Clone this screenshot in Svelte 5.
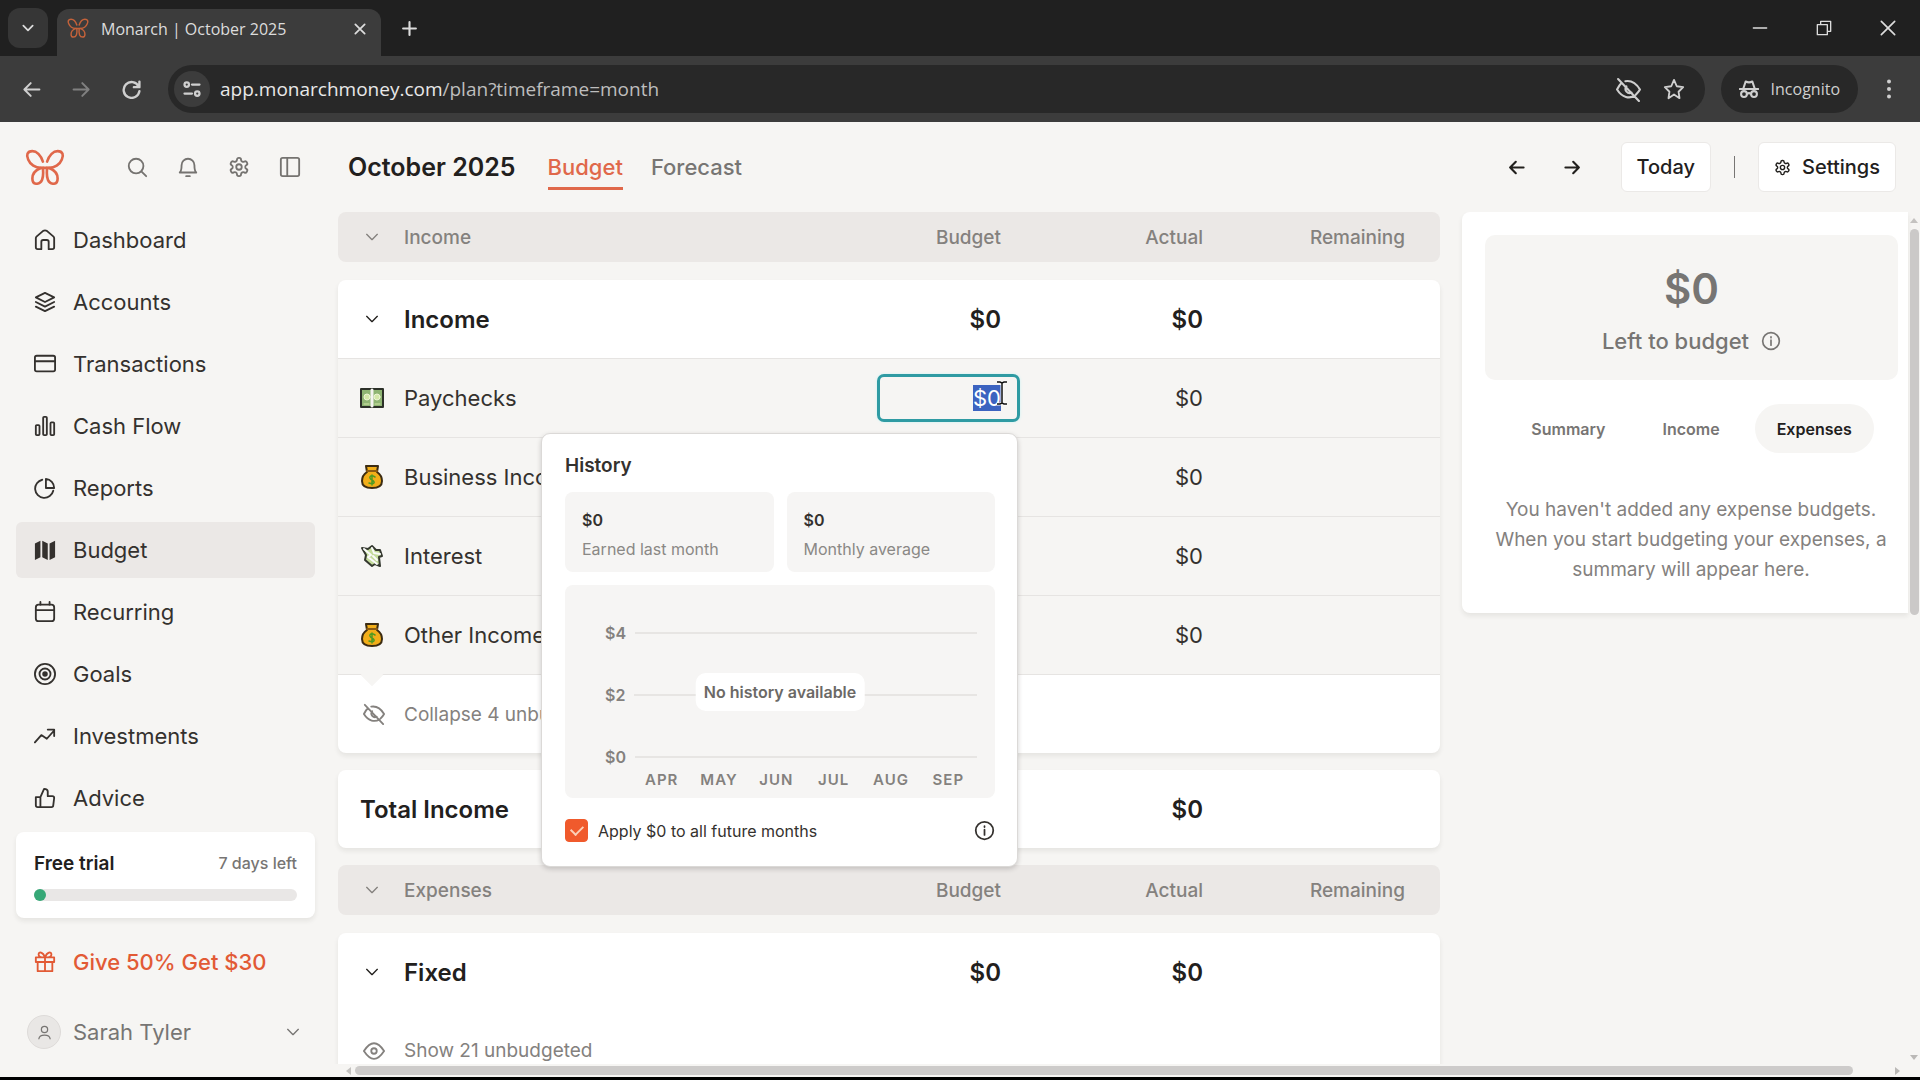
<script>
  import { onMount } from 'svelte';

  const icons = {
    search: '<circle cx="11" cy="11" r="8"/><path d="M17 17l5 5"/>',
    bell: '<path d="M3 18c2-2 2-4 2-8a7 7 0 0 1 14 0c0 4 0 6 2 8zM10 22h4"/>',
    gear: '<circle cx="12" cy="12" r="3"/><path d="M12.22 2h-.44a2 2 0 0 0-2 2v.18a2 2 0 0 1-1 1.73l-.43.25a2 2 0 0 1-2 0l-.15-.08a2 2 0 0 0-2.73.73l-.22.38a2 2 0 0 0 .73 2.73l.15.1a2 2 0 0 1 1 1.72v.51a2 2 0 0 1-1 1.74l-.15.09a2 2 0 0 0-.73 2.73l.22.38a2 2 0 0 0 2.73.73l.15-.08a2 2 0 0 1 2 0l.43.25a2 2 0 0 1 1 1.73V20a2 2 0 0 0 2 2h.44a2 2 0 0 0 2-2v-.18a2 2 0 0 1 1-1.73l.43-.25a2 2 0 0 1 2 0l.15.08a2 2 0 0 0 2.73-.73l.22-.39a2 2 0 0 0-.73-2.73l-.15-.08a2 2 0 0 1-1-1.74v-.5a2 2 0 0 1 1-1.74l.15-.09a2 2 0 0 0 .73-2.73l-.22-.38a2 2 0 0 0-2.73-.73l-.15.08a2 2 0 0 1-2 0l-.43-.25a2 2 0 0 1-1-1.73V4a2 2 0 0 0-2-2z"/>',
    panel: '<rect x="2" y="2" width="20" height="20" rx="2"/><path d="M9 2v20"/>',
    home: '<path d="M2 10a3 3 0 0 1 1-2l7-6q2-1 4 0l7 6a3 3 0 0 1 1 2v10a2 2 0 0 1-2 2h-4v-8a2 2 0 0 0-2-2h-4a2 2 0 0 0-2 2v8H4a2 2 0 0 1-2-2z"/>',
    layers: '<path d="M12 2l10 5-10 5L2 7zM2 12l10 5 10-5M2 17l10 5 10-5"/>',
    card: '<rect x="1" y="3" width="22" height="17" rx="2"/><path d="M1 9h22"/>',
    bars: '<rect x="2" y="11" width="4" height="11" rx="1"/><rect x="10" y="2" width="4" height="20" rx="1"/><rect x="18" y="8" width="4" height="14" rx="1"/>',
    pie: '<path d="M9 3a10 10 0 1 0 12 12"/><path d="M13 2v10h9a10 10 0 0 0-9-10z"/>',
    map: '<path fill="currentColor" stroke="none" d="M1 5l6-3v18l-6 3zM9 2l6 3v18l-6-3zM17 5l6-3v18l-6 3z"/>',
    calendar: '<rect x="2" y="4" width="20" height="18" rx="3"/><path d="M2 10h20M7 1v3M17 1v3"/>',
    target: '<circle cx="12" cy="12" r="11"/><circle cx="12" cy="12" r="6"/><circle cx="12" cy="12" r="2" fill="currentColor"/>',
    trend: '<path d="M1 19l7-8 6 4 8-9M15 5h7v7"/>',
    thumb: '<path d="M2 11h5v11H4a2 2 0 0 1-2-2zM7 11l4-9c2 0 4 1 4 3v5h5a2 2 0 0 1 2 2l-1 8a2 2 0 0 1-2 2H7"/>',
    gift: '<path d="M2 7h20v5H2zM4 12v10h16V12M12 7v15M12 7C10 1 5 0 5 4c0 2 2 3 7 3 5 0 7-1 7-3 0-4-5-3-7 3z"/>',
    person: '<circle cx="12" cy="7" r="5"/><path d="M3 22c1-8 17-8 18 0"/>',
    chevron: '<path d="M4 8l8 8 8-8"/>',
    left: '<path d="M22 12H3M11 4l-8 8 8 8"/>',
    right: '<path d="M2 12h19M13 4l8 8-8 8"/>',
    info: '<circle cx="12" cy="12" r="10"/><path d="M12 11v6M12 7v1"/>',
    eye: '<path d="M1 12q11-17 22 0-11 17-22 0z"/><circle cx="12" cy="12" r="3"/>',
    eyeOff: '<path d="M2 2l20 21M5 6c-2 2-3 4-4 6 5 8 12 9 17 6M9 4c6-1 11 3 14 8-1 2-2 3-4 5M10 9a4 4 0 0 0 5 6"/>',
    reload: '<path d="M21 8A10 10 0 1 0 22 14M22 2v7h-7"/>',
    star: '<path d="M12 2l3 7 7 1-5 5 1 7-6-4-6 4 1-7-5-5 7-1z"/>',
    close: '<path d="M4 4l16 16M20 4L4 20"/>',
    plus: '<path d="M12 3v18M3 12h18"/>',
    tune: '<circle cx="5" cy="6" r="3"/><path d="M12 6h10M2 18h10"/><circle cx="19" cy="18" r="3"/>',
    minimize: '<path d="M2 12h20"/>',
    restore: '<path d="M2 7h15v15H2zM7 7V2h15v15h-5"/>',
    dots: '<g fill="currentColor" stroke="none"><circle cx="12" cy="3" r="2.4"/><circle cx="12" cy="12" r="2.4"/><circle cx="12" cy="21" r="2.4"/></g>',
    incognito: '<path d="M1 12h22M5 12l3-9q4 2 8 0l3 9"/><circle cx="6" cy="18" r="3.5"/><circle cx="18" cy="18" r="3.5"/><path d="M9.5 18q2.500-2 5 0"/>',
    cash: '<rect x="1" y="3" width="22" height="18" fill="#8fb573" stroke="#2c3028"/><circle cx="7" cy="11" r="3" fill="#d3e8a8" stroke="#eef5d4" stroke-width="1"/><circle cx="17" cy="11" r="3" fill="#d3e8a8" stroke="#eef5d4" stroke-width="1"/><path d="M12 4v16" stroke="#f4f4f0" stroke-width="3"/><path d="M4 18h5M15 18h5" stroke="#d3e8a8" stroke-width="1"/>',
    bag: '<path d="M6 1h12l-1 6c3 2 5 5 5 9 0 5-4 7-10 7S2 21 2 16c0-4 2-7 5-9z" fill="#f2ae19" stroke="#3c2c12"/><path d="M7 6h10" stroke="#8a5a12"/><path d="M15 12c-5-3-7 1-3 3s2 5-3 3M12 10v10" stroke="#4f9a23" stroke-width="1.500"/>',
    wings: '<path d="M2 4l6 1 4-3 4 4h4l2 6-3 1 1 9-5-2-3 2-7-6 1-5z" fill="#c4db9c" stroke="#34382f"/><path d="M4 5l7 6-3 2 9 7M12 4l2 5 6 1M13 12l4 4" stroke="#fafafa"/>'
  };

  const nav = [
    ['home', 'Dashboard'],
    ['layers', 'Accounts'],
    ['card', 'Transactions'],
    ['bars', 'Cash Flow'],
    ['pie', 'Reports'],
    ['map', 'Budget'],
    ['calendar', 'Recurring'],
    ['target', 'Goals'],
    ['trend', 'Investments'],
    ['thumb', 'Advice']
  ];
  const tools = [
    ['search', 'Search'],
    ['bell', 'Notifications'],
    ['gear', 'Preferences'],
    ['panel', 'Toggle sidebar']
  ];
  const categories = [
    ['cash', 'Paychecks'],
    ['bag', 'Business Income'],
    ['wings', 'Interest'],
    ['bag', 'Other Income']
  ];
  const stats = ['Earned last month', 'Monthly average'];
  const months = ['APR', 'MAY', 'JUN', 'JUL', 'AUG', 'SEP'];
  const summaryTabs = ['Summary', 'Income', 'Expenses'];

  let activeTab = $state('Expenses');
  let applyFuture = $state(true);
  let amount = $state('$0');
  let amountInput;

  onMount(() => {
    amountInput.focus();
    amountInput.select();
  });
</script>

{#snippet icon(name, size = 24, weight = 2)}
  <svg width={size} height={size} viewBox="0 0 24 24" fill="none" stroke="currentColor" stroke-width={weight} stroke-linecap="round" stroke-linejoin="round" aria-hidden="true">
    {@html icons[name]}
  </svg>
{/snippet}

{#snippet logo(width)}
  <svg {width} viewBox="0 0 38 35" fill="none" stroke="currentColor" stroke-width="2.5" stroke-linecap="round" stroke-linejoin="round" aria-hidden="true">
    <path d="M17 12C15 6 11 2 7 2 2 2 1 6 3 10c2 5 7 8 12 8h8c5 0 10-3 12-8 2-4 1-8-4-8-4 0-8 4-10 10" />
    <path d="M15 18c-5 2-8 6-8 10 0 3 1 5 4 5 5 0 7-5 6-15M23 18c5 2 8 6 8 10 0 3-1 5-4 5-5 0-7-5-6-15" />
  </svg>
{/snippet}

{#snippet columns(title)}
  <thead>
    <tr>
      <th class="name"><button class="toggle" aria-label="Collapse {title}">{@render icon('chevron', 16)}</button>{title}</th>
      <th>Budget</th>
      <th>Actual</th>
      <th>Remaining</th>
    </tr>
  </thead>
{/snippet}

{#snippet group(title)}
  <tr class="group">
    <td class="name"><button class="toggle" aria-label="Collapse {title} group">{@render icon('chevron', 16)}</button>{title}</td>
    <td>$0</td>
    <td>$0</td>
    <td></td>
  </tr>
{/snippet}

<div class="window">
  <div class="tab-strip">
    <button class="tab-list" aria-label="Search tabs">{@render icon('chevron', 14, 3)}</button>
    <div class="browser-tab">
      <span class="favicon">{@render logo(22)}</span>
      <span class="tab-title">Monarch | October 2025</span>
      <button aria-label="Close tab">{@render icon('close', 14, 3)}</button>
    </div>
    <button class="new-tab" aria-label="New tab">{@render icon('plus', 17, 3)}</button>
    <div class="window-buttons">
      <button aria-label="Minimize">{@render icon('minimize', 16)}</button>
      <button aria-label="Restore">{@render icon('restore', 16)}</button>
      <button aria-label="Close window">{@render icon('close', 20)}</button>
    </div>
  </div>

  <div class="toolbar">
    <button aria-label="Back">{@render icon('left', 19, 2.5)}</button>
    <button class="dim" aria-label="Forward">{@render icon('right', 19, 2.5)}</button>
    <button class="reload" aria-label="Reload">{@render icon('reload', 19, 3)}</button>
    <div class="address">
      <span class="site-info">{@render icon('tune', 18, 3)}</span>
      <span class="url">app.monarchmoney.com<span>/plan?timeframe=month</span></span>
      <button aria-label="Tracking protection">{@render icon('eyeOff', 25)}</button>
      <button aria-label="Bookmark">{@render icon('star', 22)}</button>
    </div>
    <div class="incognito">{@render icon('incognito', 20, 2.5)}Incognito</div>
    <button aria-label="Menu">{@render icon('dots', 20)}</button>
  </div>

  <div class="page">
    <aside>
      <div class="brand-row">
        <a class="brand" href="#dashboard" aria-label="Monarch">{@render logo(40)}</a>
        {#each tools as [name, label]}
          <button aria-label={label}>{@render icon(name, 22)}</button>
        {/each}
      </div>

      <nav>
        {#each nav as [name, label]}
          <a href="#{name}" class:active={label === 'Budget'}>{@render icon(name, 22)}{label}</a>
        {/each}
      </nav>

      <div class="trial">
        <div class="trial-text"><strong>Free trial</strong><span>7 days left</span></div>
        <div class="trial-bar"><div></div></div>
      </div>
      <a class="referral" href="#referral">{@render icon('gift', 22)}Give 50% Get $30</a>
      <button class="account">
        <span class="avatar">{@render icon('person', 15)}</span>
        <span class="account-name">Sarah Tyler</span>
        {@render icon('chevron', 16)}
      </button>
    </aside>

    <main>
      <header>
        <h1>October 2025</h1>
        <a class="view active" href="#budget">Budget</a>
        <a class="view" href="#forecast">Forecast</a>
        <div class="spacer"></div>
        <button class="arrow" aria-label="Previous month">{@render icon('left', 17, 3)}</button>
        <button class="arrow" aria-label="Next month">{@render icon('right', 17, 3)}</button>
        <button class="solid">Today</button>
        <span class="divider"></span>
        <button class="solid">{@render icon('gear', 17)}Settings</button>
      </header>

      <div class="content">
        <div class="tables">
          <table>
            {@render columns('Income')}
            <tbody class="card">
              {@render group('Income')}
              {#each categories as [name, label], i}
                <tr class="category">
                  <td class="name"><span class="emoji">{@render icon(name, 24)}</span>{label}</td>
                  <td>
                    {#if i === 0}
                      <div class="amount">
                        <input aria-label="{label} budget" bind:value={amount} bind:this={amountInput} />
                        <svg class="cursor" width="12" height="26" viewBox="0 0 12 26" fill="none" aria-hidden="true">
                          <path d="M1 2h3l2 1 2-1h3M6 3v20M1 24h3l2-1 2 1h3" stroke="#fff" stroke-width="3" />
                          <path d="M1 2h3l2 1 2-1h3M6 3v20M1 24h3l2-1 2 1h3" stroke="#111" stroke-width="1.5" />
                        </svg>

                        <div class="history">
                          <h2>History</h2>
                          <div class="stats">
                            {#each stats as stat}
                              <div><strong>$0</strong><span>{stat}</span></div>
                            {/each}
                          </div>
                          <div class="chart">
                            <div class="grid-line"><span>$4</span></div>
                            <div class="grid-line"><span>$2</span></div>
                            <div class="grid-line"><span>$0</span></div>
                            <div class="months">
                              {#each months as month}<span>{month}</span>{/each}
                            </div>
                            <div class="no-history">No history available</div>
                          </div>
                          <div class="apply">
                            <label><input type="checkbox" bind:checked={applyFuture} />Apply $0 to all future months</label>
                            <button aria-label="More information">{@render icon('info', 21)}</button>
                          </div>
                        </div>
                      </div>
                    {/if}
                  </td>
                  <td>$0</td>
                  <td></td>
                </tr>
              {/each}
              <tr class="reveal notched">
                <td class="name"><button>{@render icon('eyeOff', 22)}Collapse 4 unbudgeted</button></td>
              </tr>
            </tbody>
            <tbody class="card">
              <tr class="group">
                <td class="name">Total Income</td>
                <td>$0</td>
                <td>$0</td>
                <td></td>
              </tr>
            </tbody>
          </table>

          <table>
            {@render columns('Expenses')}
            <tbody class="card">
              {@render group('Fixed')}
              <tr class="reveal">
                <td class="name"><button>{@render icon('eye', 22)}Show 21 unbudgeted</button></td>
              </tr>
            </tbody>
          </table>
        </div>

        <section class="summary card">
          <div class="left">
            <strong>$0</strong>
            <span>Left to budget {@render icon('info', 20)}</span>
          </div>
          <div class="summary-tabs">
            {#each summaryTabs as tab}
              <button class:active={tab === activeTab} onclick={() => (activeTab = tab)}>{tab}</button>
            {/each}
          </div>
          <p>You haven't added any expense budgets. When you start budgeting your expenses, a summary will appear here.</p>
        </section>

        <div class="scroll-y">
          <i class="up"></i>
          <div></div>
          <i class="down"></i>
        </div>
      </div>
      <div class="scroll-x">
        <i class="back"></i>
        <div></div>
        <i class="forward"></i>
      </div>
    </main>
  </div>
</div>

<style>
  :global(body) {
    margin: 0;
    background: #000;
  }

  .window {
    height: 100vh;
    box-sizing: border-box;
    border-bottom: 3px solid #000;
    display: flex;
    flex-direction: column;
    overflow: hidden;
    background: #f6f5f3;
    color: #22201d;
    font-family: Inter, 'Liberation Sans', sans-serif;
    font-size: 19px;
  }

  .window * {
    box-sizing: border-box;
  }

  button {
    padding: 0;
    border: 0;
    background: none;
    color: inherit;
    font: inherit;
    cursor: pointer;
    display: flex;
    align-items: center;
    justify-content: center;
  }

  a {
    color: inherit;
    text-decoration: none;
  }

  svg {
    display: block;
    flex-shrink: 0;
  }

  /* browser frame */
  .tab-strip {
    height: 56px;
    flex-shrink: 0;
    display: flex;
    align-items: center;
    padding-left: 8px;
    background: #202020;
    color: #dcdcdc;
    font-family: 'Open Sans', 'Noto Sans', sans-serif;
    font-size: 16px;
  }

  .tab-list {
    width: 40px;
    height: 40px;
    border-radius: 12px;
    background: #363636;
  }

  .browser-tab {
    width: 324px;
    height: 47px;
    align-self: flex-end;
    margin-left: 9px;
    padding: 0 14px 8px 10px;
    display: flex;
    align-items: center;
    gap: 12px;
    border-radius: 12px 12px 0 0;
    background: #3c3c3c;
  }

  .favicon {
    color: #c4623a;
  }

  .tab-title {
    flex: 1;
    white-space: nowrap;
  }

  .new-tab {
    margin-left: 20px;
  }

  .window-buttons {
    margin-left: auto;
    display: flex;
  }

  .window-buttons button {
    width: 64px;
    height: 56px;
  }

  .toolbar {
    height: 66px;
    flex-shrink: 0;
    display: flex;
    align-items: center;
    padding: 0 8px;
    background: #3c3c3c;
    color: #cfcfcf;
    font-family: 'Open Sans', 'Noto Sans', sans-serif;
  }

  .toolbar > button {
    width: 46px;
    height: 46px;
  }

  .toolbar > .dim {
    margin-left: 4px;
    color: #808080;
  }

  .toolbar > .reload {
    margin-left: 4px;
  }

  .address {
    flex: 1;
    height: 48px;
    margin-left: 14px;
    padding: 0 20px 0 6px;
    display: flex;
    align-items: center;
    gap: 22px;
    border-radius: 24px;
    background: #282828;
  }

  .site-info {
    width: 36px;
    height: 36px;
    margin-right: -12px;
    display: grid;
    place-items: center;
    border-radius: 18px;
    background: #3c3c3c;
  }

  .url {
    flex: 1;
    color: #e8e8e8;
  }

  .url span {
    color: #bdbdbd;
  }

  .incognito {
    height: 48px;
    margin: 0 8px 0 16px;
    padding: 0 18px;
    display: flex;
    align-items: center;
    gap: 12px;
    border-radius: 24px;
    background: #282828;
    font-size: 16px;
  }

  /* sidebar */
  .page {
    flex: 1;
    min-height: 0;
    display: flex;
  }

  aside {
    width: 330px;
    flex-shrink: 0;
    padding: 0 15px 10px 16px;
    display: flex;
    flex-direction: column;
    font-size: 22px;
    color: #34312e;
  }

  .brand-row {
    height: 90px;
    flex-shrink: 0;
    display: flex;
    align-items: center;
    padding-left: 9px;
    color: #757370;
  }

  .brand {
    margin-right: auto;
    color: #e0684a;
  }

  .brand-row button {
    width: 51px;
    height: 50px;
  }

  nav {
    display: flex;
    flex-direction: column;
    gap: 6px;
  }

  nav a,
  .referral {
    height: 56px;
    padding-left: 18px;
    display: flex;
    align-items: center;
    gap: 17px;
    border-radius: 6px;
  }

  nav .active {
    background: #ebe8e6;
  }

  .card,
  .trial {
    background: #fff;
    border-radius: 8px;
    box-shadow: 0 3px 5px rgba(34, 32, 29, 0.08);
  }

  .trial {
    margin-top: 6px;
    padding: 18px;
    height: 86px;
  }

  .trial-text {
    display: flex;
    align-items: center;
    justify-content: space-between;
    height: 26px;
  }

  .trial-text strong {
    font-size: 19px;
    font-weight: 600;
    color: #22201d;
  }

  .trial-text span {
    font-size: 16px;
    font-weight: 500;
    color: #777573;
  }

  .trial-bar {
    height: 12px;
    margin-top: 13px;
    border-radius: 6px;
    background: #e9e7e6;
  }

  .trial-bar div {
    width: 12px;
    height: 12px;
    border-radius: 6px;
    background: #36a877;
  }

  .referral {
    margin-top: 16px;
    color: #e25a35;
    font-weight: 500;
  }

  .account {
    margin-top: 14px;
    height: 56px;
    padding: 0 14px 0 11px;
    gap: 12px;
    color: #777573;
  }

  .avatar {
    width: 34px;
    height: 34px;
    display: grid;
    place-items: center;
    border: 1px solid #dedbd9;
    border-radius: 17px;
    background: #e9e7e5;
  }

  .account-name {
    flex: 1;
    text-align: left;
  }

  /* main column */
  main {
    flex: 1;
    min-width: 0;
    display: flex;
    flex-direction: column;
  }

  header {
    height: 90px;
    flex-shrink: 0;
    padding: 0 24px 0 18px;
    display: flex;
    align-items: center;
  }

  h1 {
    margin: 0 32px 0 0;
    font-size: 25px;
    font-weight: 600;
  }

  .view {
    height: 46px;
    margin-right: 28px;
    line-height: 46px;
    font-size: 22px;
    font-weight: 500;
    color: #777573;
  }

  .view.active {
    border-bottom: 3px solid #e0684a;
    color: #e0684a;
  }

  .spacer {
    flex: 1;
  }

  .arrow {
    width: 56px;
    height: 48px;
  }

  .solid {
    height: 50px;
    padding: 0 15px;
    gap: 11px;
    border: 1px solid #ebe9e7;
    border-radius: 6px;
    background: #fff;
    font-size: 20px;
    font-weight: 500;
  }

  .arrow + .solid {
    margin-left: 20px;
  }

  .divider {
    width: 1px;
    height: 22px;
    margin: 0 23px;
    background: #777573;
  }

  .content {
    flex: 1;
    min-height: 0;
    display: flex;
    align-items: flex-start;
    padding-left: 8px;
    overflow: hidden;
  }

  .tables {
    flex: 1;
  }

  table,
  thead,
  tbody {
    display: block;
  }

  thead {
    margin-bottom: 18px;
    border-radius: 8px;
    background: #ebe8e6;
    color: #84817e;
  }

  tbody {
    margin-bottom: 17px;
  }

  tr {
    display: grid;
    grid-template-columns: 1fr 202px 202px 202px;
    align-items: center;
    height: 79px;
    padding: 0 35px 0 22px;
  }

  thead tr {
    height: 50px;
  }

  th,
  td {
    padding: 0;
    text-align: right;
    font-weight: 400;
  }

  th {
    font-weight: 500;
  }

  .name {
    display: flex;
    align-items: center;
    text-align: left;
  }

  .toggle {
    width: 24px;
    height: 24px;
    margin-right: 20px;
  }

  tr.group {
    height: 78px;
    font-size: 24px;
  }

  .group td {
    font-weight: 600;
  }

  .category {
    border-top: 1px solid #e6e4e2;
    background: #f6f5f3;
    font-size: 22px;
    color: #34312e;
  }

  .emoji {
    width: 26px;
    margin-right: 18px;
  }

  .reveal {
    color: #84817e;
  }

  .notched {
    position: relative;
    border-top: 1px solid #e6e4e2;
  }

  .notched::before {
    content: '';
    position: absolute;
    left: 26px;
    top: -8px;
    width: 16px;
    height: 16px;
    background: #f6f5f3;
    transform: rotate(45deg);
  }

  .reveal button {
    padding-left: 3px;
    gap: 19px;
    white-space: nowrap;
  }

  /* budget field and its history popover */
  .amount {
    position: relative;
    width: 143px;
    margin: 0 -19px 0 auto;
  }

  .amount > input {
    display: block;
    width: 100%;
    height: 48px;
    padding: 0 16px;
    border: 3px solid #2f9ba3;
    border-radius: 7px;
    outline: none;
    background: #f6f5f3;
    box-shadow: 0 0 3px #c9f3f4;
    color: #34312e;
    font: inherit;
    text-align: right;
  }

  .amount > input::selection {
    background: #3c63c0;
    color: #fff;
  }

  .cursor {
    position: absolute;
    right: 12px;
    top: 6px;
  }

  .history {
    position: absolute;
    z-index: 2;
    top: 59px;
    right: 2px;
    width: 477px;
    height: 434px;
    padding: 20px 22px 20px 23px;
    border: 1px solid #dbd9d7;
    border-radius: 9px;
    background: #fff;
    box-shadow: 0 2px 5px rgba(34, 32, 29, 0.2);
    font-size: 16px;
    text-align: left;
  }

  h2 {
    margin: 0 0 14px;
    font-size: 19px;
    line-height: 24px;
    font-weight: 600;
  }

  .stats {
    display: grid;
    grid-template-columns: 1fr 1fr;
    gap: 13px;
  }

  .stats div {
    height: 80px;
    padding: 14px 17px;
    border-radius: 8px;
    background: #f6f5f4;
    line-height: 30px;
  }

  .stats strong {
    display: block;
    font-weight: 600;
    line-height: 28px;
  }

  .stats span {
    color: #8a8885;
    white-space: nowrap;
  }

  .chart {
    position: relative;
    margin-top: 13px;
    padding: 36px 18px 0 40px;
    height: 213px;
    border-radius: 8px;
    background: #f6f5f4;
    color: #84817e;
    font-weight: 600;
  }

  .grid-line {
    display: flex;
    align-items: center;
    gap: 9px;
    height: 24px;
    margin-bottom: 38px;
  }

  .grid-line::after {
    content: '';
    flex: 1;
    height: 2px;
    background: #e7e5e3;
  }

  .months {
    display: grid;
    grid-template-columns: repeat(6, 1fr);
    margin: -37px 0 0 28px;
    font-size: 15px;
    letter-spacing: 1px;
    text-align: center;
  }

  .no-history {
    position: absolute;
    top: 88px;
    left: 50%;
    transform: translateX(-50%);
    padding: 0 8px;
    border-radius: 10px;
    background: #fff;
    color: #6b6966;
    line-height: 38px;
    white-space: nowrap;
  }

  .apply {
    display: flex;
    align-items: center;
    justify-content: space-between;
    margin-top: 21px;
    color: #34312e;
  }

  .apply label {
    display: flex;
    align-items: center;
    gap: 10px;
  }

  .apply input {
    appearance: none;
    width: 23px;
    height: 23px;
    margin: 0;
    border: 1px solid #c9c7c5;
    border-radius: 4px;
    display: grid;
    place-items: center;
  }

  .apply input:checked {
    border-color: #f05a2c;
    background: #f05a2c;
  }

  .apply input:checked::before {
    content: '';
    width: 6px;
    height: 10px;
    margin-bottom: 3px;
    border: solid #fbd0b8;
    border-width: 0 2px 2px 0;
    transform: rotate(45deg);
  }

  /* summary panel */
  .summary {
    width: 446px;
    flex-shrink: 0;
    margin-left: 22px;
    padding: 23px 10px 28px 23px;
    border-radius: 8px 0 0 8px;
  }

  .left {
    height: 145px;
    padding-top: 30px;
    display: flex;
    flex-direction: column;
    align-items: center;
    gap: 14px;
    border-radius: 10px;
    background: #f6f5f3;
    color: #777573;
    font-weight: 500;
  }

  .left strong {
    font-size: 42px;
    line-height: 48px;
    font-weight: 600;
  }

  .left span {
    display: flex;
    align-items: center;
    gap: 12px;
    font-size: 22px;
    line-height: 28px;
  }

  .summary-tabs {
    display: flex;
    justify-content: center;
    gap: 13px;
    margin: 24px 0 16px;
  }

  .summary-tabs button {
    height: 49px;
    padding: 0 22px;
    border-radius: 25px;
    color: #777573;
    font-size: 16px;
    font-weight: 600;
  }

  .summary-tabs .active {
    background: #f6f5f3;
    color: #22201d;
  }

  p {
    margin: 0 -10px 0 -23px;
    padding: 26px 20px 0 32px;
    color: #84817e;
    line-height: 30px;
    text-align: center;
  }

  /* scrollbars */
  i {
    border: 4px solid transparent;
  }

  .scroll-y {
    align-self: stretch;
    width: 12px;
    flex-shrink: 0;
    display: flex;
    flex-direction: column;
    align-items: center;
  }

  .scroll-y div {
    width: 9px;
    height: 386px;
    margin: 6px 0 auto;
    border-radius: 5px;
    background: #cbc9c8;
  }

  .up {
    margin-top: 2px;
    border-bottom: 5px solid #c4c2c0;
  }

  .down {
    border-top: 5px solid #bab8b6;
  }

  .scroll-x {
    height: 13px;
    flex-shrink: 0;
    display: flex;
    align-items: center;
    padding: 0 16px 0 12px;
  }

  .scroll-x div {
    flex: 1;
    height: 9px;
    margin: 0 42px 0 4px;
    border-radius: 5px;
    background: #cdcbca;
  }

  .back {
    border-right: 5px solid #c4c2c0;
  }

  .forward {
    border-left: 5px solid #bab8b6;
  }
</style>
